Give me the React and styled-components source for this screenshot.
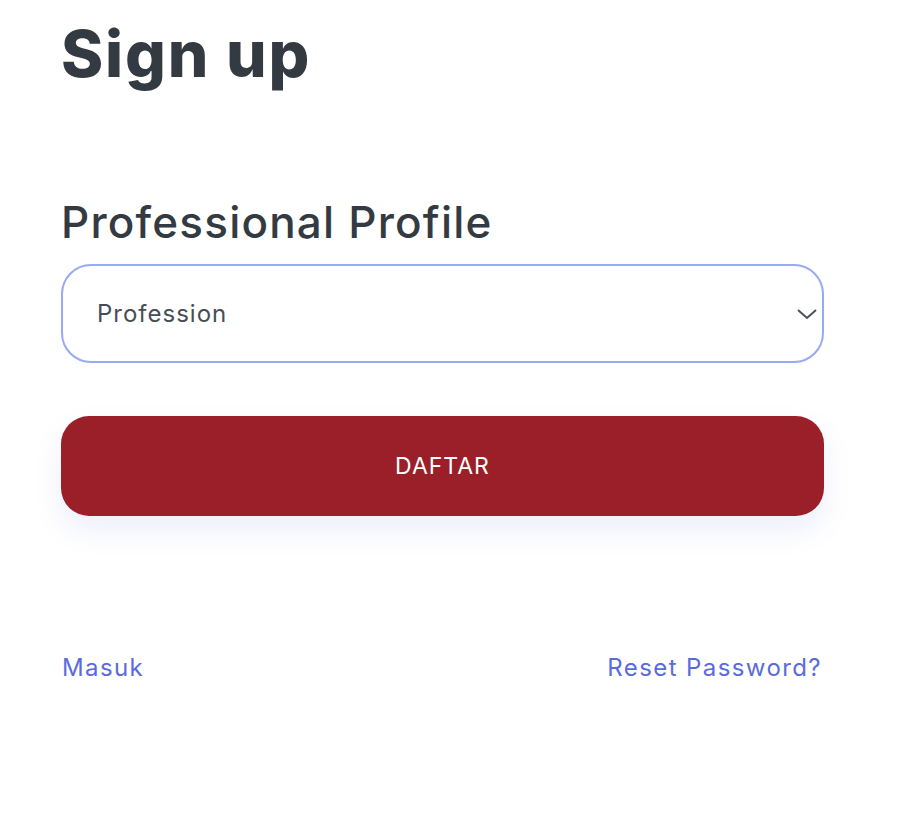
import React from "react";
import styled, { createGlobalStyle } from "styled-components";

const GlobalStyle = createGlobalStyle`
  body {
    margin: 0;
    background: #ffffff;
    font-family: "Inter", "Noto Sans", sans-serif;
  }
  * { box-sizing: border-box; }
`;

const Page = styled.div`
  width: 904px;
  height: 834px;
  padding: 14px 0 0 61px;
`;

const Form = styled.form`
  width: 763px;
  display: flex;
  flex-direction: column;
`;

const Title = styled.h1`
  margin: 0;
  font-size: 64px;
  font-weight: 800;
  color: #343a42;
  line-height: 80px;
  letter-spacing: 1.8px;
`;

const Label = styled.h2`
  margin: 99px 0 0;
  font-size: 44px;
  font-weight: 500;
  color: #343a42;
  line-height: 58px;
  letter-spacing: 1.2px;
`;

const SelectWrap = styled.div`
  position: relative;
  margin-top: 13px;
  height: 99px;
  border: 2px solid #98a9f7;
  border-radius: 30px;
  display: flex;
  align-items: center;
  padding: 0 34px;
  font-size: 24px;
  letter-spacing: 1px;
  color: #474d56;
`;

const Chevron = styled.svg`
  position: absolute;
  right: 4px;
  top: 50%;
  transform: translateY(-50%);
`;

const Button = styled.button`
  margin-top: 53px;
  height: 100px;
  border: none;
  border-radius: 28px;
  background: #9b1f28;
  color: #ffffff;
  font-family: inherit;
  font-size: 23px;
  font-weight: 400;
  letter-spacing: 1px;
  box-shadow: 0 14px 28px rgba(110, 120, 220, 0.12);
`;

const Links = styled.div`
  margin-top: 137px;
  display: flex;
  justify-content: space-between;
  padding: 0 2px 0 1px;
`;

const Link = styled.a`
  font-size: 24px;
  letter-spacing: 1.4px;
  color: #5a6be0;
  text-decoration: none;
`;

export default function App() {
  return (
    <>
      <GlobalStyle />
      <Page>
        <Form>
          <Title>Sign up</Title>
          <Label>Professional Profile</Label>
          <SelectWrap>
            Profession
            <Chevron width="22" height="14" viewBox="0 0 22 14" fill="none" stroke="#4a5059" strokeWidth="2">
              <path d="M2 3l9 8 9-8" />
            </Chevron>
          </SelectWrap>
          <Button type="button">DAFTAR</Button>
          <Links>
            <Link href="#">Masuk</Link>
            <Link href="#">Reset Password?</Link>
          </Links>
        </Form>
      </Page>
    </>
  );
}
